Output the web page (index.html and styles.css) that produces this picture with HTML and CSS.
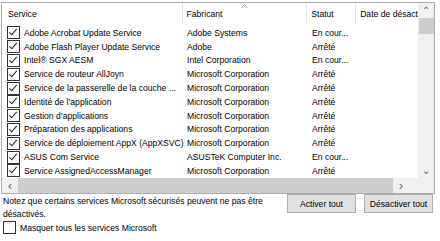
FILE: index.html
```html
<!DOCTYPE html>
<html lang="fr">
<head>
    <meta charset="UTF-8">
    <title>Services</title>
    <link rel="stylesheet" href="styles.css">
</head>
<body>
    <div class="listview">
        <div class="content">
            <div class="header">
                <div class="col c1">Service</div>
                <div class="col c2">Fabricant
                    <svg class="sort" width="7" height="4" viewBox="0 0 7 4"><path d="M0.5 3.5 L3.5 0.5 L6.5 3.5" fill="none" stroke="#a0a0a0" stroke-width="1"/></svg>
                </div>
                <div class="col c3">Statut</div>
                <div class="col c4">Date de désact</div>
            </div>
            <div class="rows">
                <div class="row"><div class="c1"><span class="check on"></span>Adobe Acrobat Update Service</div><div class="c2">Adobe Systems</div><div class="c3">En cour...</div></div>
                <div class="row"><div class="c1"><span class="check on"></span>Adobe Flash Player Update Service</div><div class="c2">Adobe</div><div class="c3">Arrêté</div></div>
                <div class="row"><div class="c1"><span class="check on"></span>Intel® SGX AESM</div><div class="c2">Intel Corporation</div><div class="c3">En cour...</div></div>
                <div class="row"><div class="c1"><span class="check on"></span>Service de routeur AllJoyn</div><div class="c2">Microsoft Corporation</div><div class="c3">Arrêté</div></div>
                <div class="row"><div class="c1"><span class="check on"></span>Service de la passerelle de la couche ...</div><div class="c2">Microsoft Corporation</div><div class="c3">Arrêté</div></div>
                <div class="row"><div class="c1"><span class="check on"></span>Identité de l’application</div><div class="c2">Microsoft Corporation</div><div class="c3">Arrêté</div></div>
                <div class="row"><div class="c1"><span class="check on"></span>Gestion d’applications</div><div class="c2">Microsoft Corporation</div><div class="c3">Arrêté</div></div>
                <div class="row"><div class="c1"><span class="check on"></span>Préparation des applications</div><div class="c2">Microsoft Corporation</div><div class="c3">Arrêté</div></div>
                <div class="row"><div class="c1"><span class="check on"></span>Service de déploiement AppX (AppXSVC)</div><div class="c2">Microsoft Corporation</div><div class="c3">Arrêté</div></div>
                <div class="row"><div class="c1"><span class="check on"></span>ASUS Com Service</div><div class="c2">ASUSTeK Computer Inc.</div><div class="c3">En cour...</div></div>
                <div class="row"><div class="c1"><span class="check on"></span>Service AssignedAccessManager</div><div class="c2">Microsoft Corporation</div><div class="c3">Arrêté</div></div>
            </div>
        </div>
        <div class="vscroll">
            <span class="arrow">&#8963;</span>
            <div class="vthumb"></div>
            <div class="track"></div>
            <span class="arrow down">&#8964;</span>
        </div>
        <div class="hscroll">
            <span class="arrow">&lsaquo;</span>
            <div class="hthumb"></div>
            <span class="arrow">&rsaquo;</span>
        </div>
        <div class="corner"></div>
    </div>

    <div class="footer">
        <p class="note">Notez que certains services Microsoft sécurisés peuvent ne pas être désactivés.</p>
        <div class="buttons">
            <button class="btn">Activer tout</button>
            <button class="btn">Désactiver tout</button>
        </div>
    </div>
    <label class="hide-ms"><span class="check"></span>Masquer tous les services Microsoft</label>
</body>
</html>
```

FILE: styles.css
```css
body {
    margin: 0;
    padding: 2px 0 0 1px;
    background: #ffffff;
    font-family: 'Liberation Sans', Arial, sans-serif;
    font-size: 8.6px;
    color: #000;
    width: 440px;
    height: 241px;
    overflow: hidden;
    box-sizing: border-box;
}
.listview {
    width: 434px;
    height: 192px;
    box-sizing: border-box;
    border: 1px solid #adadad;
    display: grid;
    grid-template-columns: 1fr 16px;
    grid-template-rows: 1fr 15px;
    background: #fff;
}
.content {
    overflow: hidden;
}
.header {
    display: flex;
    height: 21px;
    align-items: center;
}
.header .col {
    height: 21px;
    display: flex;
    align-items: center;
    border-right: 1px solid #e5e5e5;
    box-sizing: border-box;
    position: relative;
}
.c1 { width: 181px; padding-left: 6px; box-sizing: border-box; }
.c2 { width: 125px; padding-left: 4px; box-sizing: border-box; }
.c3 { width: 49px; padding-left: 4px; box-sizing: border-box; }
.c4 { width: 62px; padding-left: 4px; box-sizing: border-box; white-space: nowrap; overflow: hidden; }
.header .c4 { border-right: none; }
.sort {
    position: absolute;
    left: 58px;
    top: 1px;
}
.rows {
    padding-top: 2px;
}
.row {
    display: flex;
    height: 13.8px;
    align-items: center;
    white-space: nowrap;
}
.row .c1 {
    display: flex;
    align-items: center;
    padding-left: 5px;
}
.check {
    display: inline-block;
    width: 11px;
    height: 11px;
    border: 1px solid #333;
    background: #fff;
    margin-right: 4px;
    position: relative;
    flex-shrink: 0;
}
.check.on::after {
    content: "";
    position: absolute;
    left: 3px;
    top: 0px;
    width: 3px;
    height: 7px;
    border-right: 1px solid #222;
    border-bottom: 1px solid #222;
    transform: rotate(40deg);
}
.vscroll {
    background: #f0f0f0;
    display: flex;
    flex-direction: column;
    align-items: center;
}
.vscroll .arrow {
    height: 15px;
    line-height: 15px;
    font-size: 10px;
    color: #606060;
}
.vthumb {
    width: 15px;
    height: 16px;
    background: #cdcdcd;
}
.track {
    flex: 1;
}
.hscroll {
    background: #f0f0f0;
    display: flex;
    align-items: center;
}
.hscroll .arrow {
    width: 16px;
    text-align: center;
    font-size: 12px;
    color: #606060;
}
.hthumb {
    height: 15px;
    width: 375px;
    background: #cdcdcd;
}
.corner {
    background: #f0f0f0;
}
.footer {
    display: flex;
    justify-content: space-between;
    align-items: flex-start;
    width: 432px;
}
.note {
    margin: 1px 0 0 2px;
    width: 275px;
    line-height: 12.5px;
}
.buttons {
    display: flex;
    gap: 8px;
    margin-top: 0;
}
.btn {
    font-family: inherit;
    font-size: 8.6px;
    background: #e1e1e1;
    border: 1px solid #adadad;
    height: 19px;
    width: 69px;
    padding: 0;
    color: #000;
}
.hide-ms {
    display: flex;
    align-items: center;
    margin-top: 1px;
    margin-left: 2px;
}
```
